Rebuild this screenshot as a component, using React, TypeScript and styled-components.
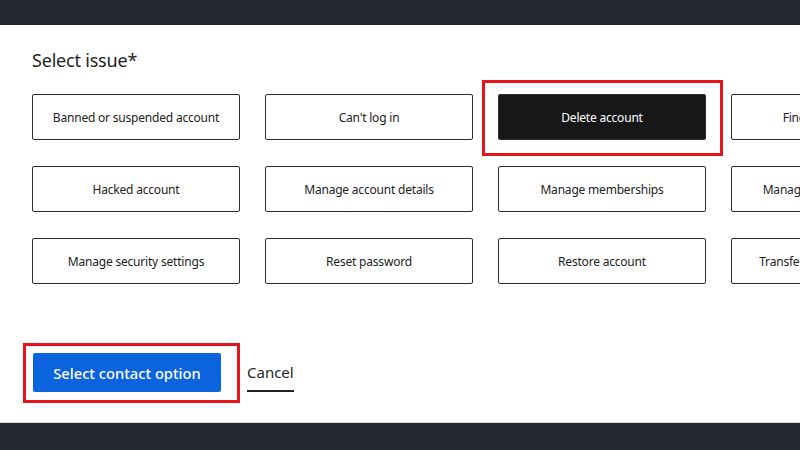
import styled, { createGlobalStyle } from "styled-components";

const GlobalStyle = createGlobalStyle`
  html, body {
    margin: 0;
    padding: 0;
    width: 800px;
    height: 450px;
    overflow: hidden;
    background: #ffffff;
    font-family: "Noto Sans", "Open Sans", sans-serif;
  }
`;

const Page = styled.div`
  display: flex;
  flex-direction: column;
  width: 800px;
  height: 450px;
  overflow: hidden;
`;

const TopBar = styled.div`
  height: 25px;
  flex-shrink: 0;
  background: #252831;
`;

const Main = styled.main`
  flex: 1;
  display: flex;
  flex-direction: column;
  padding: 22px 0 0 32px;
  background: #ffffff;
  border-bottom: 1px solid #d6d6d6;
`;

const Title = styled.h2`
  margin: 0;
  font-size: 18px;
  line-height: 26px;
  font-weight: 400;
  letter-spacing: -0.2px;
  color: #1f1f1f;
`;

const IssueGrid = styled.div`
  display: grid;
  grid-template-columns: repeat(4, 208px);
  grid-auto-rows: 46px;
  column-gap: 25px;
  row-gap: 26px;
  margin-top: 21px;
`;

const Cell = styled.div`
  position: relative;
`;

const Option = styled.button<{ selected?: boolean }>`
  width: 100%;
  height: 100%;
  box-sizing: border-box;
  border: 1.5px solid #2e2e2e;
  border-radius: 2px;
  background: ${(p) => (p.selected ? "#171717" : "#ffffff")};
  color: ${(p) => (p.selected ? "#ffffff" : "#222222")};
  font-family: inherit;
  font-size: 12px;
  letter-spacing: -0.2px;
  white-space: nowrap;
  cursor: pointer;
`;

const Highlight = styled.div<{ t: number; l: number; r: number; b: number }>`
  position: absolute;
  top: ${(p) => p.t}px;
  left: ${(p) => p.l}px;
  right: ${(p) => p.r}px;
  bottom: ${(p) => p.b}px;
  border: 3px solid #e8141b;
  pointer-events: none;
`;

const Footer = styled.div`
  display: flex;
  align-items: center;
  gap: 26px;
  margin-top: 69px;
  padding-left: 1px;
`;

const PrimaryWrap = styled.div`
  position: relative;
`;

const PrimaryButton = styled.button`
  width: 188px;
  height: 39px;
  border: none;
  border-radius: 2px;
  background: #0b63de;
  color: #ffffff;
  font-family: inherit;
  font-size: 14.7px;
  font-weight: 500;
  cursor: pointer;
`;

const CancelLink = styled.a`
  margin-top: 8px;
  font-size: 15px;
  color: #1f1f1f;
  text-decoration: none;
  line-height: 20px;
  padding-bottom: 8px;
  border-bottom: 2px solid #222;
  cursor: pointer;
`;

const BottomBar = styled.div`
  height: 27px;
  flex-shrink: 0;
  background: #252831;
`;

const issues = [
  "Banned or suspended account",
  "Can't log in",
  "Delete account",
  "Find my account ID",
  "Hacked account",
  "Manage account details",
  "Manage memberships",
  "Manage 2-step verification",
  "Manage security settings",
  "Reset password",
  "Restore account",
  "Transfer account ownership",
];

export default function App() {
  const selected = "Delete account";
  return (
    <>
      <GlobalStyle />
      <Page>
        <TopBar />
        <Main>
          <Title>Select issue*</Title>
          <IssueGrid>
            {issues.map((issue) => (
              <Cell key={issue}>
                <Option selected={issue === selected}>{issue}</Option>
                {issue === selected && <Highlight t={-14} l={-16} r={-17} b={-16} />}
              </Cell>
            ))}
          </IssueGrid>
          <Footer>
            <PrimaryWrap>
              <PrimaryButton>Select contact option</PrimaryButton>
              <Highlight t={-10} l={-10} r={-19} b={-11} />
            </PrimaryWrap>
            <CancelLink>Cancel</CancelLink>
          </Footer>
        </Main>
        <BottomBar />
      </Page>
    </>
  );
}
